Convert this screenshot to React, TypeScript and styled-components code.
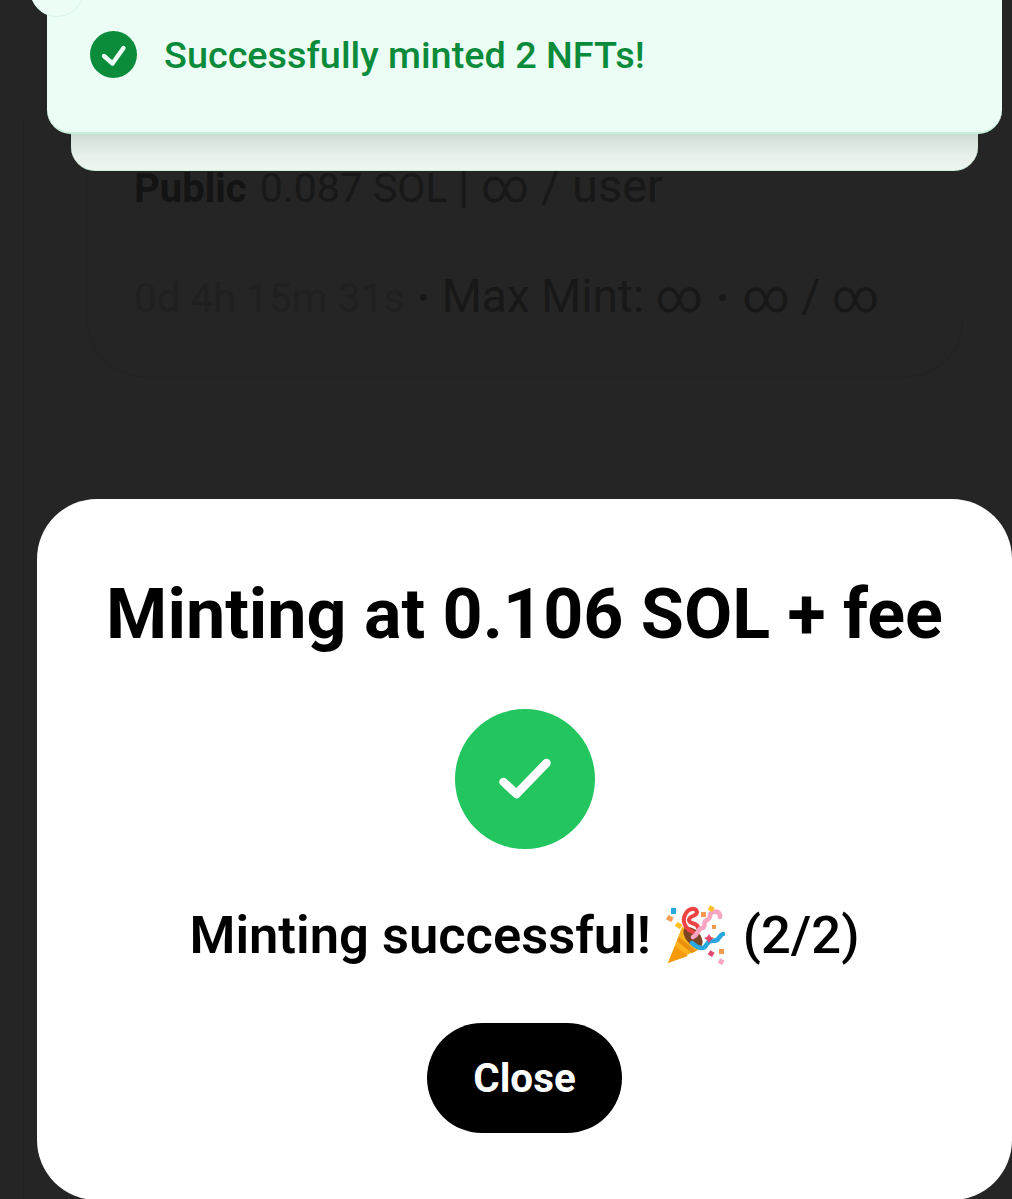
import React from "react";
import styled, { createGlobalStyle } from "styled-components";

const Global = createGlobalStyle`
  html, body { margin: 0; padding: 0; background: #252525; }
  body { font-family: Roboto, "Liberation Sans", sans-serif; }
`;

const Screen = styled.div`
  position: relative;
  width: 1012px;
  height: 1199px;
  overflow: hidden;
  background: #252525;
`;

const PageShell = styled.main`
  box-sizing: border-box;
  height: 1081px;
  margin: 118px 0 0 23px;
  padding: 0 0 0 63px;
  border-left: 1px solid #222222;
  border-top: 1px solid #232323;
`;

const PhaseCard = styled.section`
  box-sizing: border-box;
  width: 876px;
  height: 259px;
  margin-top: -1px;
  padding: 44px 0 0 48px;
  border: 1px solid #232323;
  border-top: 0;
  border-radius: 0 0 56px 56px;
`;

const PhaseTitle = styled.div`
  height: 47px;
  font-size: 41px;
  line-height: 47px;
  color: #181818;
  white-space: nowrap;
  strong { font-size: 40px; font-weight: 700; color: #141414; margin: 0 3px 0 -2px; }
`;

const PhaseLimit = styled.span`
  font-size: 47px;
`;

const PhaseMeta = styled.div`
  margin-top: 62px;
  margin-left: -2px;
  font-size: 46px;
  line-height: 50px;
  color: #181818;
  white-space: nowrap;
`;

const Timer = styled.span`
  font-size: 40.9px;
  color: #202020;
`;

const MetaDot = styled.span<{ $width: number }>`
  display: inline-block;
  width: ${(p) => p.$width}px;
  font-size: 34px;
  line-height: 1;
  text-align: center;
  vertical-align: 2px;
`;

const ToastBehind = styled.div`
  position: absolute;
  left: 71px;
  top: 100px;
  box-sizing: border-box;
  width: 907px;
  height: 71px;
  border-radius: 0 0 24px 24px;
  background: linear-gradient(#cfdcd4 34px, #e6f1ea 56px, #edf6ef 70px);
  border-bottom: 1px solid #cdeedd;
`;

const Toast = styled.div`
  position: absolute;
  left: 47px;
  top: -40px;
  box-sizing: border-box;
  width: 955px;
  height: 174px;
  padding: 71px 0 54px 43px;
  display: flex;
  align-items: center;
  gap: 27px;
  background: #ebfdf4;
  border-radius: 24px;
  border-bottom: 2px solid #c6f2dc;
`;

const ToastText = styled.span`
  font-size: 37.8px;
  font-weight: 500;
  line-height: 44px;
  color: #0a8b3b;
  white-space: nowrap;
`;

const DismissBubble = styled.div`
  position: absolute;
  left: 30px;
  top: -37px;
  width: 54px;
  height: 54px;
  border-radius: 50%;
  background: #ebfdf4;
  border: 1px solid #d9f7e7;
  box-sizing: border-box;
`;

const Modal = styled.section`
  position: absolute;
  left: 37px;
  top: 499px;
  width: 975px;
  height: 701px;
  box-sizing: border-box;
  padding-top: 78px;
  background: #ffffff;
  border-radius: 60px;
  display: flex;
  flex-direction: column;
  align-items: center;
`;

const Title = styled.h1`
  margin: 0;
  font-size: 70px;
  line-height: 74px;
  font-weight: 700;
  color: #000000;
  white-space: nowrap;
`;

const SuccessBadge = styled.div`
  width: 140px;
  height: 140px;
  margin-top: 58px;
  border-radius: 50%;
  background: #22c55e;
  display: flex;
  align-items: center;
  justify-content: center;
`;

const Status = styled.p`
  display: flex;
  align-items: center;
  margin: 51px 0 0;
  font-size: 52.5px;
  line-height: 70px;
  font-weight: 600;
  color: #000000;
  white-space: nowrap;
`;

const StatusCount = styled.span`
  font-weight: 500;
`;

const Popper = styled.svg`
  margin: 0 17px 0 15px;
  flex: none;
`;

const CloseButton = styled.button`
  width: 195px;
  height: 110px;
  margin-top: 53px;
  border: 0;
  border-radius: 55px;
  background: #000000;
  color: #ffffff;
  font-family: inherit;
  font-size: 40.4px;
  font-weight: 700;
`;

const CheckIcon = () => (
  <svg width="60" height="60" viewBox="0 0 60 60" fill="none" aria-hidden>
    <path d="M8.5 33 L21.5 45 L51.5 14" stroke="#fff" strokeWidth="8.5" strokeLinecap="round" strokeLinejoin="round" />
  </svg>
);

const ToastCheck = () => (
  <svg width="47" height="47" viewBox="0 0 47 47" style={{ flex: "none" }} aria-hidden>
    <circle cx="23.5" cy="23.5" r="23.5" fill="#0b8c3b" />
    <path d="M14 25 L22.5 32.5 L33.5 17" fill="none" stroke="#ebfdf4" strokeWidth="4.4" strokeLinecap="round" strokeLinejoin="round" />
  </svg>
);

const PartyPopper = () => (
  <Popper width="60" height="60" viewBox="0 0 60 60" aria-hidden>
    <path d="M2 58 L16 22 C24 23 36 34 37 43 Z" fill="#fbb11c" />
    <path d="M2 58 L9 41 L22 51 Z" fill="#f59b0b" />
    <path d="M13 32 L30 46 L26 48 L11 36 Z" fill="#e8900c" />
    <ellipse cx="27" cy="32" rx="7" ry="12" transform="rotate(-42 27 32)" fill="#7a4522" />
    <path d="M27 27 C19 24 16 16 19 10 C22 3 30 2 31 7 C31 12 23 10 23 15 C23 20 32 17 32 23" fill="none" stroke="#ef4444" strokeWidth="4" strokeLinecap="round" />
    <path d="M27 32 C33 29 31 24 36 23 C41 22 36 17 41 15 C46 13 42 8 47 7 C51 6 54 7 54 12" fill="none" stroke="#f8a5c2" strokeWidth="4.6" strokeLinecap="round" />
    <path d="M26 38 C33 44 38 45 41 39 C44 33 49 38 52 34 C54 31 56 29 57 29" fill="none" stroke="#29a8e0" strokeWidth="4.6" strokeLinecap="round" />
    <rect x="5" y="3" width="5" height="6" fill="#29a8e0" />
    <rect x="1" y="11" width="6" height="5" transform="rotate(25 4 13)" fill="#f59b52" />
    <rect x="10" y="18" width="6" height="5" transform="rotate(35 13 20)" fill="#fbbf24" />
    <rect x="35" y="7" width="5" height="5" fill="#f59b52" />
    <rect x="43" y="1" width="5" height="5" transform="rotate(30 45 3)" fill="#fbbf24" />
    <rect x="46" y="20" width="4" height="4" fill="#f59b52" />
    <path d="M43 29 L45 32 L48 33 L45 35 L43 38 L41 35 L38 33 L41 32 Z" fill="#e2476c" />
    <rect x="53" y="44" width="5" height="5" fill="#f59b52" />
    <rect x="43" y="46" width="5" height="5" transform="rotate(30 45 48)" fill="#e2476c" />
    <rect x="53" y="54" width="5" height="5" transform="rotate(30 55 56)" fill="#f8a5c2" />
  </Popper>
);

export default function App() {
  return (
    <Screen>
      <Global />
      <PageShell>
        <PhaseCard>
          <PhaseTitle>
            <strong>Public</strong> 0.087 SOL <PhaseLimit>| ∞ / user</PhaseLimit>
          </PhaseTitle>
          <PhaseMeta>
            <Timer>0d 4h 15m 31s</Timer> <MetaDot $width={14}>•</MetaDot> Max Mint: ∞ <MetaDot $width={17}>•</MetaDot> ∞ / ∞
          </PhaseMeta>
        </PhaseCard>
      </PageShell>

      <ToastBehind />
      <Toast>
        <ToastCheck />
        <ToastText>Successfully minted 2 NFTs!</ToastText>
      </Toast>
      <DismissBubble />

      <Modal>
        <Title>Minting at 0.106 SOL + fee</Title>
        <SuccessBadge>
          <CheckIcon />
        </SuccessBadge>
        <Status>
          Minting successful!
          <PartyPopper />
          <StatusCount>(2/2)</StatusCount>
        </Status>
        <CloseButton>Close</CloseButton>
      </Modal>
    </Screen>
  );
}
